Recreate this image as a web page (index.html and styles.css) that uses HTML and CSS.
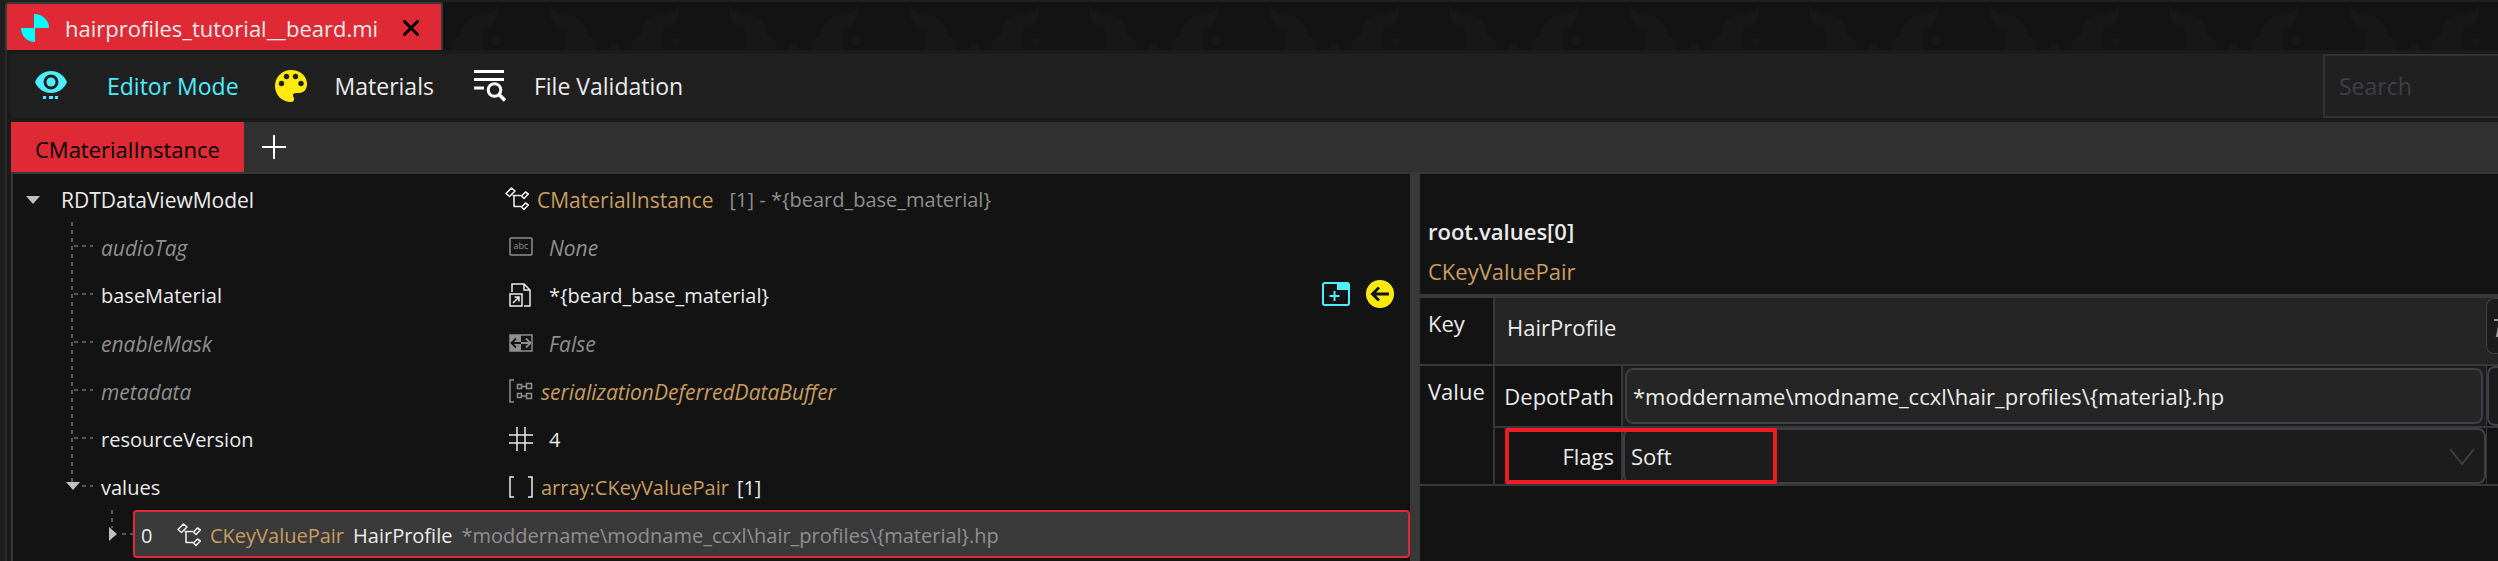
FILE: index.html
```
<!DOCTYPE html>
<html lang="en">
<head>
<meta charset="utf-8">
<title>hairprofiles_tutorial__beard.mi</title>
<link rel="stylesheet" href="styles.css">
</head>
<body>
<svg class="defs" aria-hidden="true">
  <symbol id="class-icon" viewBox="0 0 24 24">
    <g fill="none" stroke="currentColor" stroke-width="1.6" stroke-linejoin="round">
      <path d="M1 6.500 6.500 1 10 4 4.500 9.500zM7.500 8.500H16M9 9v10.500h8M16.500 9l4-4 2.800 2-4.300 4.500zM16.500 20l4-4 2.800 2-4.300 4.500z"/>
    </g>
  </symbol>
</svg>
<div class="window">
  <header class="doc-strip">
    <div class="doc-tab">
      <svg class="doc-logo" viewBox="0 0 28 28"><path fill="#00ffff" d="M13 0a15 14 0 0 1 15 14H14v14A14 14 0 0 1 0 14h13z"/></svg>
      <span>hairprofiles_tutorial__beard.mi</span>
      <button class="close" aria-label="Close"><svg viewBox="0 0 16 16"><path d="M1.500 1.500l13 13M14.500 1.500l-13 13" stroke="#000" stroke-width="3" stroke-linecap="round"/></svg></button>
    </div>
    <svg class="strip-pattern" aria-hidden="true">
      <pattern id="masks" x="106" y="-2" width="180" height="60" patternUnits="userSpaceOnUse">
        <g fill="#171717">
          <path d="M0 5C6 13 12 15 19 15 30 16 37 25 38 35L48 42 46 50H16V29C5 27 0 18 0 5z"/>
          <path d="M130 5C124 13 118 15 111 15 100 16 93 25 92 35L82 42 84 50H114V29C125 27 130 18 130 5z"/>
          <circle cx="65" cy="49" r="5"/>
          <circle cx="127" cy="42" r="4"/>
        </g>
      </pattern>
      <rect width="100%" height="100%" fill="url(#masks)"/>
    </svg>
  </header>
  <div class="document">
    <nav class="toolbar">
      <button class="tool active">
        <svg class="tool-icon" viewBox="0 0 32 32"><path fill="#4deeff" fill-rule="evenodd" d="M0 12C3 5 9 1 16 1s13 4 16 11c-3 7-9 11-16 11S3 19 0 12zm16-7.500a7.500 7.500 0 1 0 0 15 7.500 7.500 0 0 0 0-15z"/><circle cx="16" cy="12" r="4.500" fill="#4deeff"/><path fill="#4deeff" d="M8 26h3v3H8zm6 0h4v3h-4zm6 0h3v3h-3z"/></svg>
        <span>Editor Mode</span>
      </button>
      <button class="tool">
        <svg class="tool-icon" viewBox="0 0 32 32"><path fill="#ffea0a" d="M16 0C7 0 0 7 0 16s7 16 16 16c2 0 3-1 3-3 0-2-1-2-1-4 0-1 1-2 3-2h3c5 0 8-4 8-9C32 6 25 0 16 0z"/><g fill="#202020"><circle cx="6.500" cy="13.500" r="2.700"/><circle cx="11.500" cy="6.500" r="2.700"/><circle cx="20.500" cy="6.500" r="2.700"/><circle cx="26" cy="13.500" r="2.700"/></g></svg>
        <span>Materials</span>
      </button>
      <button class="tool">
        <svg class="tool-icon" viewBox="0 0 32 32"><path d="M0 1.500h30M0 9.500h30M0 18h10" stroke="#fff" stroke-width="3"/><circle cx="21" cy="20" r="9" fill="#202020"/><circle cx="20.500" cy="20" r="6.300" fill="none" stroke="#fff" stroke-width="3"/><path d="M25 24.500l6 6" stroke="#fff" stroke-width="3.500"/></svg>
        <span>File Validation</span>
      </button>
      <input class="search" type="search" placeholder="Search" aria-label="Search">
    </nav>
    <div class="chunk-tabs">
      <button class="chunk-tab">CMaterialInstance</button>
      <button class="add" aria-label="Add"><svg viewBox="0 0 24 24"><path d="M12 0v24M0 12h24" stroke="#fff" stroke-width="2"/></svg></button>
    </div>
    <main class="panes">
      <section class="tree">
        <div class="row root">
          <div class="name"><svg class="arrow" viewBox="0 0 14 8"><path d="M0 0h14L7 8z"/></svg><span>RDTDataViewModel</span></div>
          <div class="value class-value"><svg class="icon"><use href="#class-icon"/></svg><span class="type">CMaterialInstance</span><span class="dim wide">[1] - *{beard_base_material}</span></div>
        </div>
        <div class="children">
          <div class="row unset">
            <div class="name">audioTag</div>
            <div class="value plain"><svg class="icon" viewBox="0 0 24 24"><rect x="1" y="3" width="22" height="17" rx="1" fill="none" stroke="currentColor" stroke-width="1.500"/><text x="12" y="14" class="abc">abc</text></svg><span>None</span></div>
          </div>
          <div class="row">
            <div class="name">baseMaterial</div>
            <div class="value plain"><svg class="icon" viewBox="0 0 24 24"><path d="M3 9V1h12l6 6v16h-6M15 1v6h6M1 11h12v12H1zM4 20l6-6M5.500 14H10v4.500" fill="none" stroke="currentColor" stroke-width="1.500"/></svg><span>*{beard_base_material}</span></div>
            <div class="actions">
              <button aria-label="Open in new tab"><svg viewBox="0 0 28 28"><rect x="1" y="3" width="26" height="22" rx="2" fill="none" stroke="#4deeff" stroke-width="2"/><path d="M15 3h12v7H15zM11.500 15H7.500v2h4v4h2v-4h4v-2h-4v-4h-2z" fill="#4deeff"/></svg></button>
              <button aria-label="Go to file"><svg viewBox="0 0 28 28"><circle cx="14" cy="14" r="14" fill="#ffea0a"/><path d="M23 14H7M13 7.500L6.500 14l6.500 6.500" fill="none" stroke="#131313" stroke-width="3"/></svg></button>
            </div>
          </div>
          <div class="row unset">
            <div class="name">enableMask</div>
            <div class="value plain"><svg class="icon" viewBox="0 0 24 24"><rect x="1" y="4" width="22" height="16" fill="none" stroke="currentColor" stroke-width="1.500"/><path d="M1 4h11v16H1z" fill="currentColor"/><path d="M12 12H3M7 7.500L2.500 12 7 16.500" fill="none" stroke="#131313" stroke-width="1.800"/><path d="M12 12h9M17 7.500l4.500 4.500-4.500 4.500" fill="none" stroke="currentColor" stroke-width="1.800"/></svg><span>False</span></div>
          </div>
          <div class="row unset">
            <div class="name">metadata</div>
            <div class="value"><svg class="icon" viewBox="0 0 24 24"><path d="M5 1H1v22h4M8.500 5.500h4v4h-4zM17.500 4.500h5v5h-5zM8.500 14.500h4v4h-4zM17.500 14.500h5v5h-5zM12.500 7.500h5M12.500 17h5" fill="none" stroke="currentColor" stroke-width="1.500"/></svg><span class="type">serializationDeferredDataBuffer</span></div>
          </div>
          <div class="row">
            <div class="name">resourceVersion</div>
            <div class="value plain"><svg class="icon" viewBox="0 0 24 24"><path d="M8 0v24M16 0v24M0 8h24M0 16h24" fill="none" stroke="currentColor" stroke-width="1.500"/></svg><span>4</span></div>
          </div>
          <div class="row last">
            <div class="name"><svg class="arrow branch" viewBox="0 0 14 8"><path d="M0 0h14L7 8z"/></svg>values</div>
            <div class="value"><svg class="icon" viewBox="0 0 24 24"><path d="M5 2H1v20h4M19 2h4v20h-4" fill="none" stroke="currentColor" stroke-width="1.500"/></svg><span class="type">array:CKeyValuePair</span><span>[1]</span></div>
          </div>
        </div>
        <div class="leaf">
          <div class="leaf-guide"><svg class="arrow side" viewBox="0 0 8 14"><path d="M0 0l8 7-8 7z"/></svg></div>
          <div class="selected">
            <span class="index">0</span>
            <svg class="icon"><use href="#class-icon"/></svg>
            <span class="type">CKeyValuePair</span>
            <span>HairProfile</span>
            <span class="dim">*moddername\modname_ccxl\hair_profiles\{material}.hp</span>
          </div>
        </div>
      </section>
      <div class="splitter"></div>
      <section class="details">
        <div class="heading">
          <h1>root.values[0]</h1>
          <p>CKeyValuePair</p>
        </div>
        <div class="grid">
          <label class="cell-label" for="key">Key</label>
          <div class="key-field">
            <input id="key" type="text" value="HairProfile">
            <button class="side-button" aria-label="Delete"><svg viewBox="0 0 24 24"><path d="M0 6h24M5 12l-2 10h18l-2-10" fill="none" stroke="#999" stroke-width="2"/></svg></button>
          </div>
          <div class="cell-label">Value</div>
          <div class="nested">
            <label class="sub-label" for="depot">DepotPath</label>
            <div class="field depot-field"><input id="depot" type="text" value="*moddername\modname_ccxl\hair_profiles\{material}.hp"></div>
            <div class="end"><button class="side-button tall" aria-label="Browse"></button></div>
            <label class="sub-label" for="flags">Flags</label>
            <div class="field flags-field">
              <select id="flags"><option>Soft</option></select>
              <svg class="chevron" viewBox="0 0 26 18"><path d="M1 1l12 15L25 1" fill="none" stroke="#3f3f46" stroke-width="2"/></svg>
            </div>
            <div class="end"></div>
            <div class="highlight"></div>
          </div>
        </div>
      </section>
    </main>
  </div>
</div>
</body>
</html>
```
FILE: styles.css
```
* { box-sizing: border-box; }

body {
  margin: 0;
  background: #1e1e1e;
  color: #ebebeb;
  font-family: "Open Sans", "Noto Sans", sans-serif;
  font-size: 22px;
  line-height: 30px;
  overflow: hidden;
}

button, input, select {
  margin: 0;
  padding: 0;
  border: 0;
  background: none;
  color: inherit;
  font: inherit;
}

svg { display: block; flex: none; }
.defs { position: absolute; width: 0; height: 0; }

.window {
  display: flex;
  flex-direction: column;
  min-height: 100vh;
  padding-left: 5px;
  border-top: 2px solid #202020;
}

/* document tabs */
.doc-strip { display: flex; background: #131313; }

.doc-tab {
  display: flex;
  align-items: center;
  height: 48px;
  padding: 2px 22px 0 14px;
  border: 2px solid #383838;
  border-bottom: 0;
  border-radius: 3px 3px 0 0;
  background: #df2935;
}
.doc-logo { width: 28px; height: 28px; margin-right: 16px; }
.close { margin-left: 25px; }
.close svg { width: 16px; height: 16px; }
.strip-pattern { flex: 1; height: 48px; }

.document {
  display: flex;
  flex: 1;
  flex-direction: column;
  padding: 4px 0 0 4px;
  border-left: 2px solid #2b2b2b;
  background: #1b1b1b;
}

/* toolbar */
.toolbar {
  display: flex;
  height: 64px;
  padding-left: 24px;
  background: #202020;
  font-size: 23px;
}
.tool { display: flex; align-items: center; gap: 28px; margin-right: 40px; }
.tool.active { gap: 40px; margin-right: 36px; color: #4deeff; }
.tool-icon { width: 32px; height: 32px; }
.search {
  width: 175px;
  margin-left: auto;
  padding-left: 14px;
  border: 2px solid #333;
  border-right: 0;
}
.search::placeholder { color: #3f3f46; opacity: 1; }

/* chunk tabs */
.chunk-tabs {
  display: flex;
  height: 52px;
  margin-top: 4px;
  border-bottom: 2px solid #383838;
  background: #313131;
}
.chunk-tab { padding: 4px 24px 0; background: #df2935; color: #000; }
.add { padding: 0 18px; }
.add svg { width: 24px; height: 24px; }

.panes { display: flex; flex: 1; background: #131313; }

/* tree */
.tree {
  flex: 0 0 1399px;
  border-left: 2px solid #383838;
  font-size: 20px;
}
.row {
  display: grid;
  grid-template-columns: 408px 1fr auto;
  align-items: center;
  height: 48px;
  padding: 2px 16px 0 88px;
}
.name, .value span, .selected span { padding-top: 2px; }
.row.root { grid-template-columns: 479px 1fr; padding-left: 13px; }
.root .name { display: flex; align-items: center; gap: 21px; }
.root .name, .root .type, .unset { font-size: 21px; }
.arrow { width: 14px; height: 8px; fill: #c0c0c0; }
.value { display: flex; align-items: center; gap: 8px; }
.value.plain { gap: 16px; }
.icon { width: 24px; height: 24px; }
.type { color: #c99d5f; }
.dim { color: #8f8f8f; }
.wide { margin-left: 8px; }
.unset { color: #8f8f8f; font-style: italic; }
.abc { fill: currentColor; font-size: 9px; font-style: normal; text-anchor: middle; }

.children .row {
  --dash: repeating-linear-gradient(#555 0 4px, transparent 4px 8px);
  background:
    var(--dash) 58px 0 / 2px 100% no-repeat,
    repeating-linear-gradient(90deg, #555 0 4px, transparent 4px 8px) 61px 23px / 19px 2px no-repeat;
}
.children .row.last {
  background:
    var(--dash) 58px 0 / 2px 20px no-repeat,
    repeating-linear-gradient(90deg, #555 0 4px, transparent 4px 8px) 69px 23px / 11px 2px no-repeat;
}
.last .name { position: relative; }
.branch { position: absolute; top: 11px; left: -35px; }

.actions { display: flex; gap: 16px; margin-bottom: 2px; }
.actions svg { width: 28px; height: 28px; }

.leaf { display: flex; height: 48px; padding-left: 96px; }
.leaf-guide {
  display: flex;
  align-items: center;
  width: 24px;
  background:
    repeating-linear-gradient(#555 0 4px, transparent 4px 8px) 2px 0 / 2px 18px no-repeat,
    repeating-linear-gradient(90deg, #555 0 4px, transparent 4px 8px) 13px 23px / 11px 2px no-repeat;
}
.arrow.side { width: 8px; height: 14px; }
.selected {
  display: flex;
  flex: 1;
  align-items: center;
  gap: 9px;
  padding: 2px 6px 0;
  border: 2px solid #df2935;
  border-radius: 4px;
  background: #3a3a3a;
}
.index { width: 27px; }

.splitter { width: 10px; background: #383838; }

/* details */
.details { flex: 1; min-width: 0; }
.heading { padding: 42px 8px 8px; border-bottom: 4px solid #383838; }
h1, p { margin: 0; font-size: 22px; line-height: 30px; }
h1 { margin-bottom: 10px; font-weight: 600; }
p { color: #c99d5f; }

.grid { display: grid; grid-template-columns: 75px 1fr; }
.cell-label {
  padding: 10px 0 0 8px;
  border-right: 2px solid #383838;
  border-bottom: 2px solid #383838;
}
.key-field {
  display: flex;
  height: 68px;
  border-bottom: 2px solid #383838;
  background: #252525;
}
.key-field input { flex: 1; padding: 0 12px 8px; }
.side-button {
  width: 12px;
  height: 56px;
  padding-left: 7px;
  overflow: hidden;
  border: 1px solid #3f3f46;
  border-right: 0;
  border-radius: 8px 0 0 8px;
  background: #1b1b1b;
}
.side-button svg { width: 24px; height: 24px; }

.nested {
  position: relative;
  display: grid;
  grid-template-columns: 128px 1fr 12px;
  grid-template-rows: 62px 58px;
}
.nested > .sub-label, .field, .end { border-bottom: 2px solid #383838; }
.sub-label {
  display: flex;
  align-items: center;
  justify-content: flex-end;
  padding-right: 7px;
  border-right: 2px solid #383838;
}
.field { display: flex; position: relative; }
.depot-field { padding: 2px 3px 2px 2px; background: #1e1e1e; }
.field input, .field select {
  flex: 1;
  min-width: 0;
  border: 2px solid #3f3f46;
  border-radius: 8px;
  background: #252525;
}
.field input { padding-left: 6px; }
.field select { padding: 0 6px; appearance: none; background: #1c1c1c; }
.chevron { position: absolute; top: 20px; right: 11px; width: 26px; height: 18px; }
.end { border-left: 1px solid #383838; }
.side-button.tall { width: 11px; height: 60px; border-width: 2px; border-right: 0; }

.highlight {
  position: absolute;
  top: 62px;
  left: 10px;
  width: 272px;
  height: 56px;
  border: 4px solid #ed1c24;
  border-radius: 2px;
}
```
